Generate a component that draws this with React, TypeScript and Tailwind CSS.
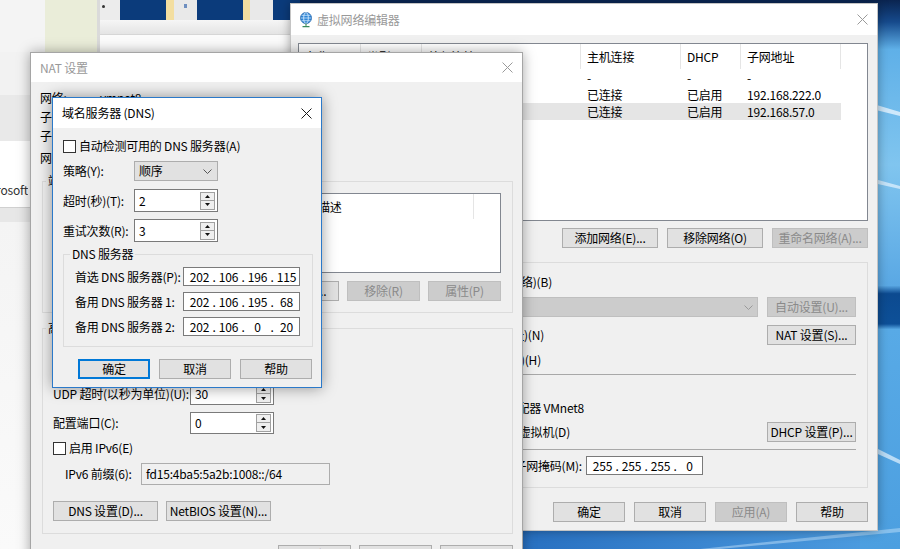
import React from "react";

type Kids = { children?: React.ReactNode; className?: string };

function X({ gray }: { gray?: boolean }) {
  return (
    <svg width="11" height="11" viewBox="0 0 11 11" className="shrink-0">
      <path d="M0.5 0.5L10.5 10.5M10.5 0.5L0.5 10.5" stroke={gray ? "#9a9a9a" : "#1a1a1a"} strokeWidth="1" />
    </svg>
  );
}

function Btn({ children, className = "", disabled, focus }: Kids & { disabled?: boolean; focus?: boolean }) {
  const tone = disabled
    ? "border bg-[#cccccc] border-[#bfbfbf] text-[#8a8a8a]"
    : focus
    ? "border-2 bg-[#e1e1e1] border-[#0078d7] text-black"
    : "border bg-[#e1e1e1] border-[#adadad] text-black";
  return (
    <div className={`h-[20px] shrink-0 flex items-center justify-center whitespace-nowrap ${tone} ${className}`}>
      {children}
    </div>
  );
}

function Check() {
  return <div className="w-[13px] h-[13px] shrink-0 border border-[#333] bg-white" />;
}

function Radio() {
  return <div className="w-[13px] h-[13px] shrink-0 rounded-full border border-[#333] bg-white" />;
}

function Chevron({ color }: { color: string }) {
  return (
    <svg width="9" height="5" viewBox="0 0 9 5" className="shrink-0">
      <path d="M0.5 0.5L4.5 4.5L8.5 0.5" stroke={color} fill="none" strokeWidth="1" />
    </svg>
  );
}

function Spin({ value, className = "" }: { value: string; className?: string }) {
  return (
    <div className={`flex shrink-0 border border-[#7a7a7a] bg-white ${className}`}>
      <div className="flex-1 flex items-center pl-[4px]">{value}</div>
      <div className="w-[17px] flex flex-col justify-center pr-[2px]">
        <div className="h-[9px] border border-[#a0a0a0] bg-[#efefef] flex items-center justify-center">
          <svg width="5" height="3" viewBox="0 0 5 3">
            <path d="M0 3L2.5 0L5 3Z" fill="#111" />
          </svg>
        </div>
        <div className="h-[9px] border border-t-0 border-[#a0a0a0] bg-[#efefef] flex items-center justify-center">
          <svg width="5" height="3" viewBox="0 0 5 3">
            <path d="M0 0L2.5 3L5 0Z" fill="#111" />
          </svg>
        </div>
      </div>
    </div>
  );
}

function Ip({ parts, className = "" }: { parts: string[]; className?: string }) {
  return (
    <div className={`w-[117px] shrink-0 border border-[#7a7a7a] bg-white flex items-center pl-[5px] ${className}`}>
      {parts.map((p, i) => (
        <React.Fragment key={i}>
          {i > 0 && <span className="w-[8px] text-center">.</span>}
          <span className="w-[21px] text-center">{p}</span>
        </React.Fragment>
      ))}
    </div>
  );
}

function Wallpaper() {
  return (
    <svg className="absolute inset-0" width="900" height="549" viewBox="0 0 900 549">
      <defs>
        <linearGradient id="wv" x1="0" y1="0" x2="0" y2="1">
          <stop offset="0" stopColor="#0a2450" />
          <stop offset="0.04" stopColor="#164a8c" />
          <stop offset="0.09" stopColor="#5fb0e8" />
          <stop offset="0.3" stopColor="#80c5ef" />
          <stop offset="0.52" stopColor="#5aa8e4" />
          <stop offset="0.535" stopColor="#0c4a90" />
          <stop offset="0.59" stopColor="#0d5098" />
          <stop offset="0.6" stopColor="#58aae6" />
          <stop offset="1" stopColor="#4c9fe0" />
        </linearGradient>
        <linearGradient id="wh" x1="0" y1="0" x2="1" y2="0">
          <stop offset="0" stopColor="#1d5cab" />
          <stop offset="0.6" stopColor="#2a72c2" />
          <stop offset="1" stopColor="#4f9fe2" />
        </linearGradient>
      </defs>
      <rect width="900" height="549" fill="#1e5aa8" />
      <rect x="0" y="0" width="900" height="12" fill="#0b2756" />
      <rect x="0" y="520" width="900" height="29" fill="url(#wh)" />
      <rect x="860" y="0" width="40" height="549" fill="url(#wv)" />
      <path d="M860 100 L900 112 L900 116 L860 106Z" fill="#e6f4ff" opacity="0.8" />
      <path d="M860 175 L900 186 L900 189 L860 180Z" fill="#e6f4ff" opacity="0.7" />
      <path d="M860 440 L900 460 L900 464 L860 446Z" fill="#e6f4ff" opacity="0.7" />
      <path d="M700 549 L900 528 L900 532 L720 549Z" fill="#bfe0fa" opacity="0.5" />
    </svg>
  );
}

function BackWindow() {
  return (
    <div className="absolute left-0 top-0 w-[300px] h-[549px] flex flex-col bg-[#f8f8f8]">
      <div className="h-[52px] flex">
        <div className="w-[45px] bg-[#f4f4f4]" />
        <div className="w-[52px] bg-[#eaedd9]" />
        <div className="w-[3px] bg-[#dadada]" />
        <div className="flex-1 flex flex-col">
          <div className="h-[20px] flex">
            <div className="w-[20px] bg-[#ececec] flex items-start pl-[2px] pt-[5px]">
              <div className="w-[3px] h-[3px] bg-[#333] rounded-full" />
            </div>
            <div className="w-[46px] bg-[#0b3b7b]" />
            <div className="w-[8px] bg-[#f3dea0]" />
            <div className="w-[23px] bg-[#e9e9e9] flex justify-center pt-[4px]">
              <div className="w-[3px] h-[4px] bg-[#6f8fc0]" />
            </div>
            <div className="w-[46px] bg-[#0b3b7b]" />
            <div className="w-[7px] bg-[#f3dea0]" />
            <div className="w-[23px] bg-[#e9e9e9]" />
            <div className="flex-1 bg-[#0b3b7b]" />
          </div>
          <div className="h-[15px] bg-gradient-to-b from-[#f6f6f6] to-[#e4e4e4] border-b border-[#d6d6d6]" />
          <div className="flex-1 bg-[#fbfbfb]" />
        </div>
      </div>
      <div className="h-[43px] bg-[#f2f2f2]" />
      <div className="h-[46px] bg-[#e9e9e9]" />
      <div className="h-[66px] bg-white flex items-end pb-[11px]">
        <div className="w-[28px] flex justify-end overflow-hidden whitespace-nowrap text-[#333]">Microsoft</div>
      </div>
      <div className="h-[15px] border-t border-[#d0d0d0] bg-[#e7e7e7]" />
      <div className="flex-1 bg-gradient-to-b from-[#f4f4f4] to-[#fafafa]" />
    </div>
  );
}

function Globe() {
  return (
    <svg width="14" height="16" viewBox="0 0 14 16" className="shrink-0">
      <circle cx="7" cy="6" r="5.5" fill="#2f86d6" stroke="#1d5fa8" strokeWidth="0.8" />
      <ellipse cx="7" cy="6" rx="2.3" ry="5.3" fill="none" stroke="#dff0ff" strokeWidth="0.8" />
      <path d="M1.6 6H12.4M2.6 3.3H11.4M2.6 8.7H11.4" stroke="#dff0ff" strokeWidth="0.7" />
      <path d="M7 11.6V13.8M3.5 14.6H10.5" stroke="#3a8a5a" strokeWidth="1.3" />
    </svg>
  );
}

const vneCols = ["w-[62px]", "w-[61px]", "w-[159px]", "w-[100px]", "w-[60px]", "w-[100px]"];
const vneHead = ["名称", "类型", "外部连接", "主机连接", "DHCP", "子网地址"];
const vneRows = [
  ["VMnet0", "桥接模式", "自动桥接", "-", "-", "-"],
  ["VMnet1", "仅主机...", "-", "已连接", "已启用", "192.168.222.0"],
  ["VMnet8", "NAT 模式", "NAT 模式", "已连接", "已启用", "192.168.57.0"],
];

function NetworkEditor() {
  return (
    <div className="absolute left-[290px] top-[3px] w-[588px] h-[528px] flex flex-col border border-[#c4c4c4] bg-[#f0f0f0] shadow-[0_0_10px_rgba(0,0,0,0.35)]">
      <div className="h-[31px] shrink-0 bg-white flex items-center pl-[8px] pr-[9px] gap-[4px]">
        <Globe />
        <span className="text-[#999]">虚拟网络编辑器</span>
        <div className="ml-auto">
          <X gray />
        </div>
      </div>
      <div className="flex-1 flex flex-col pl-[7px] pr-[9px] pt-[8px]">
        <div className="h-[178px] border border-[#828790] bg-white flex flex-col">
          <div className="h-[25px] flex">
            {vneHead.map((h, i) => (
              <div key={i} className={`${vneCols[i]} shrink-0 border-r border-[#e5e5e5] pl-[6px] flex items-center`}>
                {h}
              </div>
            ))}
          </div>
          {vneRows.map((r, ri) => (
            <div key={ri} className={`h-[17px] w-[542px] flex ${ri === 2 ? "bg-[#e5e5e5]" : ""}`}>
              {r.map((c, ci) => (
                <div key={ci} className={`${vneCols[ci]} shrink-0 pl-[6px] flex items-center whitespace-nowrap overflow-hidden`}>
                  {c}
                </div>
              ))}
            </div>
          ))}
        </div>
        <div className="mt-[7px] flex justify-end gap-[9px]">
          <Btn className="w-[96px]">添加网络(E)...</Btn>
          <Btn className="w-[96px]">移除网络(O)</Btn>
          <Btn className="w-[96px]" disabled>
            重命名网络(A)...
          </Btn>
        </div>
        <fieldset className="mt-[8px] border border-[#dcdcdc] pl-[10px] pr-[11px] pb-[12px] flex flex-col">
          <legend className="ml-[-4px] px-[2px] leading-none">VMnet 信息</legend>
          <div className="mt-[6px] h-[16px] flex items-center">
            <div className="w-[243px] flex justify-end items-center gap-[4px] whitespace-nowrap">
              <Radio />
              <span>桥接模式(将虚拟机直接连接到外部网络)(B)</span>
            </div>
          </div>
          <div className="mt-[7px] h-[20px] flex items-center">
            <div className="w-[91px] pl-[20px] whitespace-nowrap">已桥接至(G):</div>
            <div className="flex-1 h-[20px] border border-[#bfbfbf] bg-[#cccccc] flex items-center justify-end pr-[4px]">
              <Chevron color="#9a9a9a" />
            </div>
            <Btn className="ml-[9px] w-[89px]" disabled>
              自动设置(U)...
            </Btn>
          </div>
          <div className="mt-[8px] h-[20px] flex items-center">
            <div className="w-[235px] flex justify-end items-center gap-[4px] whitespace-nowrap">
              <Radio />
              <span>NAT 模式(与虚拟机共享主机的 IP 地址)(N)</span>
            </div>
            <Btn className="ml-auto w-[89px]">NAT 设置(S)...</Btn>
          </div>
          <div className="mt-[7px] h-[16px] flex items-center">
            <div className="w-[232px] flex justify-end items-center gap-[4px] whitespace-nowrap">
              <Radio />
              <span>仅主机模式(在专用网络内连接虚拟机)(H)</span>
            </div>
          </div>
          <div className="mt-[6px] border-t border-[#a8a8a8]" />
          <div className="mt-[5px] h-[16px] flex items-center gap-[4px] whitespace-nowrap">
            <Check />
            <span>将主机虚拟适配器连接到此网络(V)</span>
          </div>
          <div className="mt-[4px] h-[16px] flex items-center">
            <div className="w-[275px] flex justify-end whitespace-nowrap">主机虚拟适配器名称: VMware 网络适配器 VMnet8</div>
          </div>
          <div className="mt-[6px] h-[20px] flex items-center">
            <div className="w-[261px] flex justify-end items-center gap-[4px] whitespace-nowrap">
              <Check />
              <span>使用本地 DHCP 服务将 IP 地址分配给虚拟机(D)</span>
            </div>
            <Btn className="ml-auto w-[89px]">DHCP 设置(P)...</Btn>
          </div>
          <div className="mt-[7px] border-t border-[#a8a8a8]" />
          <div className="mt-[6px] h-[19px] flex items-center">
            <div className="w-[273px] flex justify-end items-center gap-[8px] whitespace-nowrap">
              <span>子网 IP (I):</span>
              <Ip parts={["192", "168", "57", "0"]} className="h-[19px]" />
              <span>子网掩码(M):</span>
            </div>
            <Ip parts={["255", "255", "255", "0"]} className="ml-[4px] h-[19px]" />
          </div>
        </fieldset>
        <div className="mt-[14px] flex justify-end gap-[9px]">
          <Btn className="w-[72px]">确定</Btn>
          <Btn className="w-[72px]">取消</Btn>
          <Btn className="w-[72px]" disabled>
            应用(A)
          </Btn>
          <Btn className="w-[72px]">帮助</Btn>
        </div>
      </div>
    </div>
  );
}

const natCols = ["w-[85px]", "w-[60px]", "w-[114px]", "w-[162px]"];
const natHead = ["主机端口", "类型", "虚拟机地址", "描述"];

function NatSettings() {
  return (
    <div className="absolute left-[30px] top-[52px] w-[493px] h-[530px] flex flex-col border border-[#a5a5a5] bg-[#f0f0f0] shadow-[0_0_12px_rgba(0,0,0,0.35)]">
      <div className="h-[29px] shrink-0 bg-white flex items-center pl-[9px] pr-[9px]">
        <span className="text-[#999]">NAT 设置</span>
        <div className="ml-auto">
          <X gray />
        </div>
      </div>
      <div className="flex-1 flex flex-col pl-[9px] pr-[9px] pt-[6px]">
        {[
          ["网络:", "vmnet8"],
          ["子网 IP:", "192.168.57.0"],
          ["子网掩码:", "255.255.255.0"],
        ].map(([l, v]) => (
          <div key={l} className="h-[19px] flex items-center whitespace-nowrap">
            <div className="w-[60px]">{l}</div>
            <div>{v}</div>
          </div>
        ))}
        <div className="mt-[2px] h-[22px] flex items-center whitespace-nowrap">
          <div className="w-[60px]">网关 IP(G):</div>
          <Ip parts={["192", "168", "57", "2"]} className="h-[20px]" />
        </div>
        <fieldset className="mt-[6px] ml-[2px] border border-[#dcdcdc] pl-[9px] pr-[11px] pb-[11px] flex flex-col">
          <legend className="ml-[-6px] px-[2px] leading-none">端口转发(F)</legend>
          <div className="mt-[6px] h-[80px] border border-[#828790] bg-white flex flex-col">
            <div className="h-[25px] flex">
              {natHead.map((h, i) => (
                <div key={i} className={`${natCols[i]} shrink-0 border-r border-[#e5e5e5] pl-[6px] flex items-center`}>
                  {h}
                </div>
              ))}
            </div>
          </div>
          <div className="mt-[8px] flex justify-end gap-[8px]">
            <Btn className="w-[73px]">添加(A)...</Btn>
            <Btn className="w-[73px]" disabled>
              移除(R)
            </Btn>
            <Btn className="w-[73px]" disabled>
              属性(P)
            </Btn>
          </div>
        </fieldset>
        <fieldset className="mt-[9px] ml-[2px] border border-[#dcdcdc] pl-[10px] pr-[11px] pb-[12px] flex flex-col">
          <legend className="ml-[-7px] px-[2px] leading-none">高级</legend>
          <div className="mt-[5px] h-[16px] flex items-center gap-[3px] whitespace-nowrap">
            <Check />
            <span>允许活动的 FTP(T)</span>
          </div>
          <div className="mt-[7px] h-[16px] flex items-center gap-[3px] whitespace-nowrap">
            <Check />
            <span>允许任何组织唯一标识符(O)</span>
          </div>
          <div className="mt-[5px] h-[22px] flex items-center whitespace-nowrap">
            <div className="w-[137px]">UDP 超时(以秒为单位)(U):</div>
            <Spin value="30" className="w-[84px] h-[22px]" />
          </div>
          <div className="mt-[7px] h-[22px] flex items-center whitespace-nowrap">
            <div className="w-[137px]">配置端口(C):</div>
            <Spin value="0" className="w-[84px] h-[22px]" />
          </div>
          <div className="mt-[6px] h-[16px] flex items-center gap-[3px] whitespace-nowrap">
            <Check />
            <span>启用 IPv6(E)</span>
          </div>
          <div className="mt-[7px] h-[22px] flex items-center whitespace-nowrap pl-[12px]">
            <div className="w-[76px]">IPv6 前缀(6):</div>
            <div className="w-[189px] h-[22px] border border-[#adadad] bg-[#f0f0f0] flex items-center pl-[4px]">
              fd15:4ba5:5a2b:1008::/64
            </div>
          </div>
          <div className="mt-[16px] flex gap-[8px]">
            <Btn className="w-[105px]">DNS 设置(D)...</Btn>
            <Btn className="w-[105px]">NetBIOS 设置(N)...</Btn>
          </div>
        </fieldset>
        <div className="mt-[11px] flex justify-end gap-[8px]">
          <Btn className="w-[73px]">确定</Btn>
          <Btn className="w-[73px]">取消</Btn>
          <Btn className="w-[73px]">帮助</Btn>
        </div>
      </div>
    </div>
  );
}

const dnsRows = [
  ["首选 DNS 服务器(P):", ["202", "106", "196", "115"]],
  ["备用 DNS 服务器 1:", ["202", "106", "195", "68"]],
  ["备用 DNS 服务器 2:", ["202", "106", "0", "20"]],
] as const;

function DnsDialog() {
  return (
    <div className="absolute left-[52px] top-[97px] w-[270px] h-[291px] flex flex-col border border-[#2b79c9] bg-[#f0f0f0] shadow-[0_0_14px_rgba(0,0,0,0.4)]">
      <div className="h-[30px] shrink-0 bg-white flex items-center pl-[9px] pr-[9px]">
        <span>域名服务器 (DNS)</span>
        <div className="ml-auto">
          <X />
        </div>
      </div>
      <div className="flex-1 flex flex-col pl-[10px] pr-[8px] pt-[8px]">
        <div className="h-[20px] flex items-center gap-[3px] whitespace-nowrap">
          <Check />
          <span>自动检测可用的 DNS 服务器(A)</span>
        </div>
        <div className="mt-[5px] h-[20px] flex items-center whitespace-nowrap">
          <div className="w-[71px]">策略(Y):</div>
          <div className="w-[84px] h-[20px] border border-[#adadad] bg-[#e1e1e1] flex items-center pl-[4px] pr-[5px]">
            <span>顺序</span>
            <div className="ml-auto">
              <Chevron color="#555" />
            </div>
          </div>
        </div>
        <div className="mt-[8px] h-[23px] flex items-center whitespace-nowrap">
          <div className="w-[71px]">超时(秒)(T):</div>
          <Spin value="2" className="w-[84px] h-[23px]" />
        </div>
        <div className="mt-[7px] h-[23px] flex items-center whitespace-nowrap">
          <div className="w-[71px]">重试次数(R):</div>
          <Spin value="3" className="w-[84px] h-[23px]" />
        </div>
        <fieldset className="mt-[6px] border border-[#dcdcdc] pl-[11px] pb-[10px] flex flex-col gap-[6px]">
          <legend className="ml-[-5px] px-[2px] leading-none">DNS 服务器</legend>
          {dnsRows.map(([l, p], i) => (
            <div key={l} className={`${i === 0 ? "mt-[7px]" : ""} h-[19px] flex items-center whitespace-nowrap`}>
              <div className="w-[108px]">{l}</div>
              <Ip parts={[...p]} className="h-[19px]" />
            </div>
          ))}
        </fieldset>
        <div className="mt-[12px] pr-[1px] flex justify-end gap-[9px]">
          <Btn className="w-[72px]" focus>
            确定
          </Btn>
          <Btn className="w-[72px]">取消</Btn>
          <Btn className="w-[72px]">帮助</Btn>
        </div>
      </div>
    </div>
  );
}

export default function App() {
  return (
    <div className="relative w-[900px] h-[549px] overflow-hidden text-[12px] leading-none tracking-[-0.2px] text-black font-['Noto_Sans_CJK_SC',sans-serif]">
      <Wallpaper />
      <BackWindow />
      <NetworkEditor />
      <NatSettings />
      <DnsDialog />
    </div>
  );
}
